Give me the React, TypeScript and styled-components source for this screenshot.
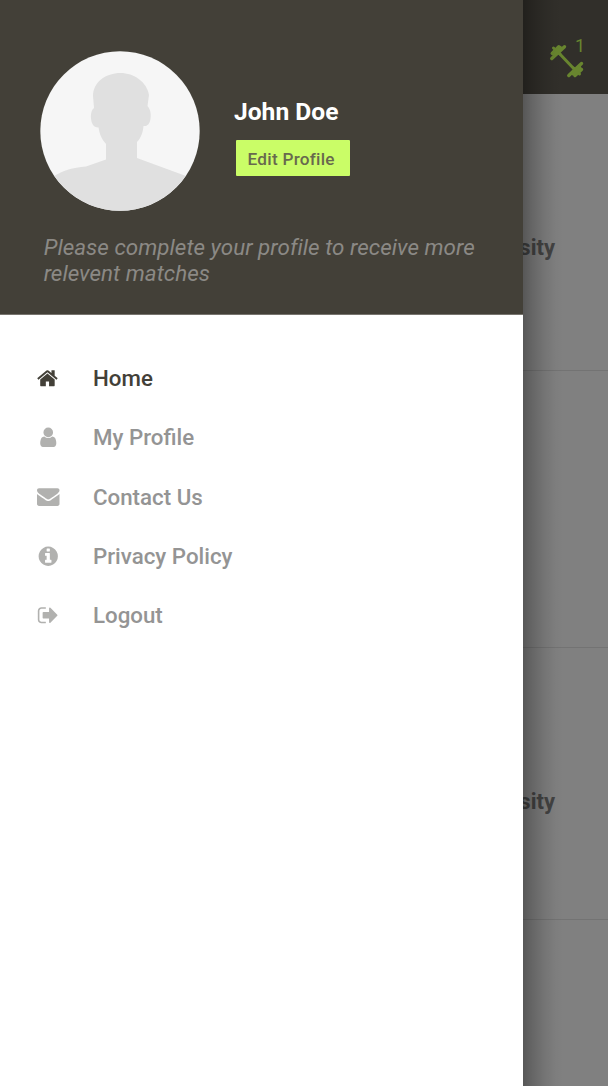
import React from 'react';
import styled, { createGlobalStyle } from 'styled-components';

const GlobalStyle = createGlobalStyle`
  * { box-sizing: border-box; }
  body { margin: 0; background: #808080; font-family: Roboto, "Liberation Sans", sans-serif; }
`;

const Screen = styled.div`
  position: relative;
  width: 608px;
  height: 1086px;
  overflow: hidden;
  background: #808080;
`;

const Page = styled.div`
  display: flex;
  flex-direction: column;
  height: 100%;
`;

const TopBar = styled.header`
  display: flex;
  justify-content: flex-end;
  flex: 0 0 94px;
  padding: 37px 23px 0 0;
  background: #312f2a;
  color: #68852f;
`;

const Matches = styled.div`
  position: relative;
  width: 36px;
  height: 42px;
`;

const MatchCount = styled.span`
  position: absolute;
  right: 0;
  top: 0;
  font-size: 18px;
  line-height: 17px;
`;

const Card = styled.section<{ $height: number; $top?: number }>`
  flex: 0 0 ${p => p.$height}px;
  padding: ${p => p.$top ?? 0}px 53px 0 0;
  border-bottom: 1px solid #737373;
  text-align: right;
  font-size: 22px;
  line-height: 26px;
  font-weight: 700;
  color: #434343;
`;

const Drawer = styled.aside`
  position: absolute;
  inset: 0 auto 0 0;
  display: flex;
  flex-direction: column;
  width: 523px;
  background: #fff;
`;

const Shade = styled.div`
  position: absolute;
  inset: 0 auto 0 523px;
  width: 40px;
  background: linear-gradient(to right, rgba(0, 0, 0, .32), rgba(0, 0, 0, .2) 25%, rgba(0, 0, 0, .09) 55%, rgba(0, 0, 0, .02) 82%, transparent);
`;

const ProfileHeader = styled.header`
  flex: 0 0 315px;
  padding: 51.4px 40px 0;
  background: #434038;
  border-bottom: 1px solid #77746e;
`;

const Identity = styled.div`
  display: flex;
  gap: 34px;
`;

const Avatar = styled.svg`
  display: block;
  width: 160px;
  height: 160px;
`;

const Details = styled.div`
  display: flex;
  flex-direction: column;
  align-items: flex-start;
  padding-top: 45.6px;
`;

const Name = styled.h1`
  margin: 0;
  font-size: 24.6px;
  line-height: 30px;
  font-weight: 700;
  color: #fff;
`;

const EditButton = styled.button`
  width: 114px;
  height: 36px;
  margin: 12.6px 0 0 1.7px;
  padding: 3px 3px 0 0;
  border: 0;
  border-radius: 1px;
  background: #cafd67;
  color: #68694e;
  font: 500 17.2px/20px Roboto, sans-serif;
  letter-spacing: .25px;
  white-space: nowrap;
`;

const Hint = styled.p`
  margin: 22.6px 0 0 3.7px;
  font-size: 22.4px;
  line-height: 26.5px;
  font-style: italic;
  letter-spacing: .03px;
  color: #8b8985;
`;

const Menu = styled.nav`
  display: flex;
  flex-direction: column;
  padding: 33.3px 37px 0;
`;

const MenuItem = styled.a<{ $active?: boolean }>`
  display: flex;
  align-items: center;
  gap: 33.1px;
  height: 59.3px;
  font-size: 22.3px;
  line-height: 28px;
  font-weight: 500;
  color: ${p => (p.$active ? '#434038' : '#949494')};

  svg {
    width: 22.5px;
    height: 22.5px;
    margin-left: .4px;
    fill: ${p => (p.$active ? '#434038' : '#b1b1af')};
  }
`;

const items = [
  { label: 'Home', path: 'M1408 992v480q0 26-19 45t-45 19h-384v-384h-256v384h-384q-26 0-45-19t-19-45v-480q0-1 .5-3t.5-3l575-474 575 474q1 2 1 6zm223-69l-62 74q-8 9-21 11h-3q-13 0-21-7l-692-577-692 577q-12 8-24 7-13-2-21-11l-62-74q-8-10-7-23.5t11-21.5l719-599q32-26 76-26t76 26l244 204v-195q0-14 9-23t23-9h192q14 0 23 9t9 23v408l219 182q10 8 11 21.5t-7 23.5z' },
  { label: 'My Profile', path: 'M1536 1399q0 109-62.5 187t-150.5 78h-854q-88 0-150.5-78t-62.5-187q0-85 8.5-160.5t31.5-152 58.5-131 94-89 134.5-34.5q131 128 313 128t313-128q76 0 134.5 34.5t94 89 58.5 131 31.5 152 8.5 160.5zm-256-887q0 159-112.5 271.5t-271.5 112.5-271.5-112.5-112.5-271.5 112.5-271.5 271.5-112.5 271.5 112.5 112.5 271.5z' },
  { label: 'Contact Us', path: 'M1792 710v794q0 66-47 113t-113 47h-1472q-66 0-113-47t-47-113v-794q44 49 101 87 362 246 497 345 57 42 92.5 65.5t94.5 48 110 24.5h2q51 0 110-24.5t94.5-48 92.5-65.5q170-123 498-345 57-39 100-87zm0-294q0 79-49 151t-122 123q-376 261-468 325-10 7-42.5 31t-54 38.5-52 32.5-57.5 27-50 9h-2q-23 0-50-9t-57.5-27-52-32.5-54-38.5-42.5-31q-91-64-262-182.5t-205-142.5q-62-42-117-115.5t-55-136.5q0-78 41.5-130t118.5-52h1472q65 0 112.5 47t47.5 113z' },
  { label: 'Privacy Policy', path: 'M1152 1376v-160q0-14-9-23t-23-9h-96v-512q0-14-9-23t-23-9h-320q-14 0-23 9t-9 23v160q0 14 9 23t23 9h96v320h-96q-14 0-23 9t-9 23v160q0 14 9 23t23 9h448q14 0 23-9t9-23zm-128-896v-160q0-14-9-23t-23-9h-192q-14 0-23 9t-9 23v160q0 14 9 23t23 9h192q14 0 23-9t9-23zm640 416q0 209-103 385.5t-279.5 279.5-385.5 103-385.5-103-279.5-279.5-103-385.5 103-385.5 279.5-279.5 385.5-103 385.5 103 279.5 279.5 103 385.5z' },
  { label: 'Logout', path: 'M704 1440q0 4 1 20t.5 26.5-3 23.5-10 19.5-20.5 6.5h-320q-119 0-203.5-84.5t-84.5-203.5v-704q0-119 84.5-203.5t203.5-84.5h320q13 0 22.5 9.5t9.5 22.5q0 4 1 20t.5 26.5-3 23.5-10 19.5-20.5 6.5h-320q-66 0-113 47t-47 113v704q0 66 47 113t113 47h312l11.5 1 11.5 3 8 5.5 7 9 2 13.5zm928-544q0 26-19 45l-544 544q-19 19-45 19t-45-19-19-45v-288h-448q-26 0-45-19t-19-45v-384q0-26 19-45t45-19h448v-288q0-26 19-45t45-19 45 19l544 544q19 19 19 45z' },
];

const Dumbbell = () => (
  <svg width="36" height="42" viewBox="0 0 36 42" fill="none" stroke="currentColor" strokeLinecap="round">
    <path d="M8 14L27 34" strokeWidth="3" />
    <path d="M2.8 21.5L15.5 9.7M3.2 16.4L9.8 9.7M19.8 38.5L32.5 26.5M26 38.5L32.5 32.5" strokeWidth="3.4" />
    <path d="M4.5 11L11 17M24.500 31L30.500 37" strokeWidth="3" />
    <path d="M5.500 16.800L11 11.500M24.500 36L30 31" strokeWidth="5" />
  </svg>
);

const Portrait = () => (
  <Avatar viewBox="0 0 160 160">
    <defs>
      <clipPath id="portrait"><circle cx="80" cy="80" r="79.7" /></clipPath>
    </defs>
    <g clipPath="url(#portrait)">
      <rect width="160" height="160" fill="#f6f6f6" />
      <path
        fill="#e0e0e0"
        d="M80.5 22C66 22 53 31 53 45L54 57C50 60 50.5 68 52 72C53 75 55.5 76.5 58.5 76.5C59.5 83 61.5 88 66 93V108.5L46 115.5C32 117 24 119 14 125L0 160H160L146 125L116 114L97 107V91C101 87 103 81 103.5 75C107 75.5 109.5 73 110.3 69C111.2 64 111 59 107.5 55L109 44C107 31 94 22 80.5 22Z"
      />
    </g>
  </Avatar>
);

export default function App() {
  return (
    <>
      <GlobalStyle />
      <Screen>
        <Page>
          <TopBar>
            <Matches>
              <Dumbbell />
              <MatchCount>1</MatchCount>
            </Matches>
          </TopBar>
          <Card $height={277} $top={141}>sity</Card>
          <Card $height={277} />
          <Card $height={272} $top={140.500}>sity</Card>
        </Page>
        <Shade />
        <Drawer>
          <ProfileHeader>
            <Identity>
              <Portrait />
              <Details>
                <Name>John Doe</Name>
                <EditButton>Edit Profile</EditButton>
              </Details>
            </Identity>
            <Hint>Please complete your profile to receive more relevent matches</Hint>
          </ProfileHeader>
          <Menu>
            {items.map((item, i) => (
              <MenuItem key={item.label} $active={i === 0}>
                <svg viewBox="0 0 1792 1792"><path d={item.path} /></svg>
                {item.label}
              </MenuItem>
            ))}
          </Menu>
        </Drawer>
      </Screen>
    </>
  );
}
